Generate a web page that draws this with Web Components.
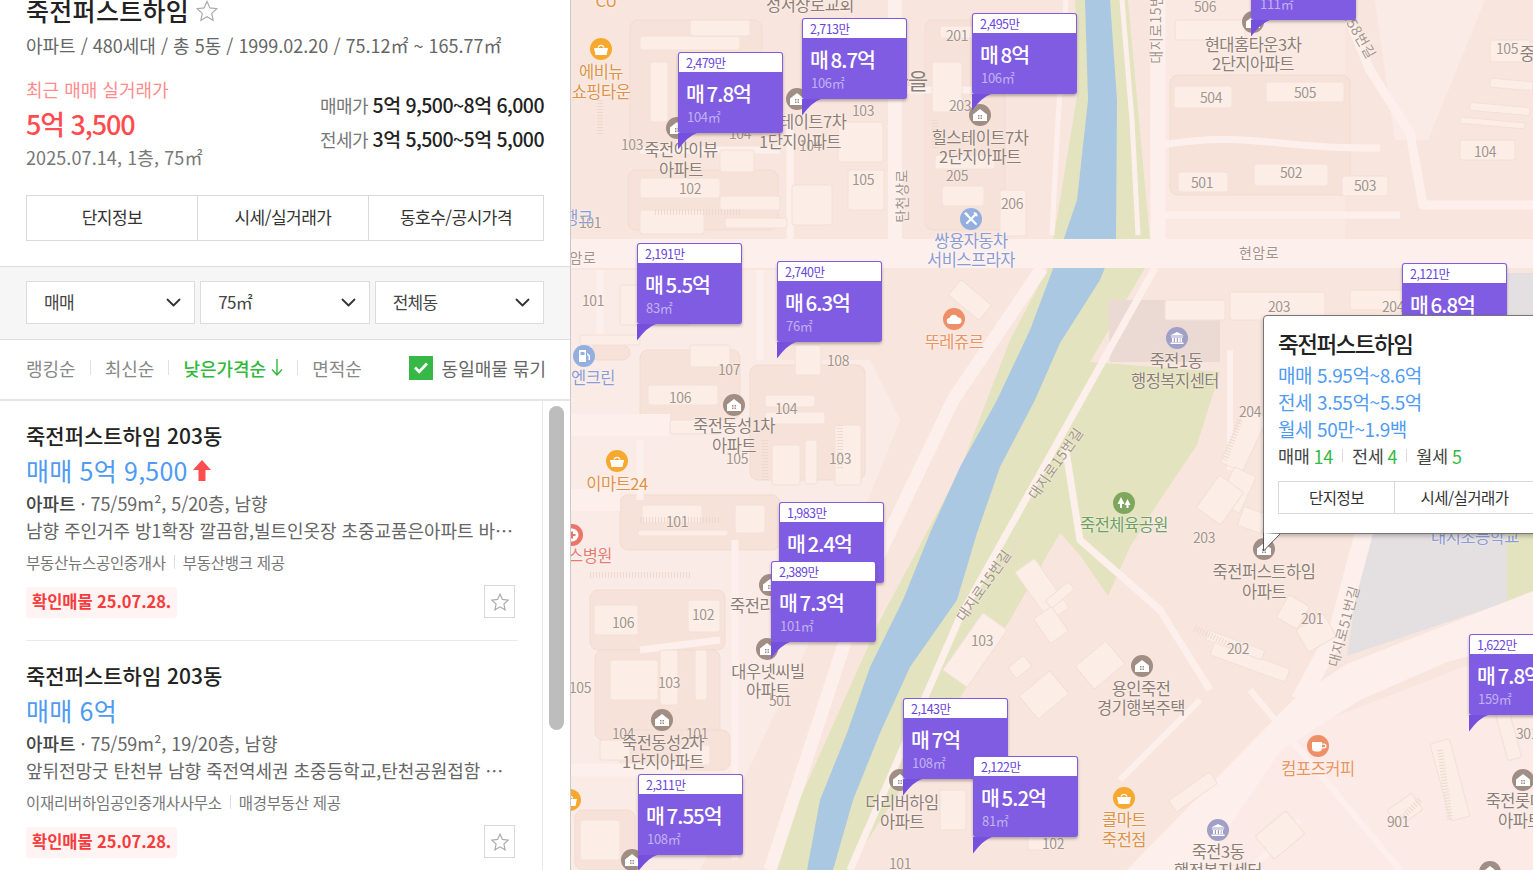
<!DOCTYPE html>
<html lang="ko">
<head>
<meta charset="utf-8">
<title>죽전퍼스트하임</title>
<style>
  html, body { margin: 0; height: 100%; overflow: hidden; background: #fff; }
  body { font-family: "Noto Sans CJK KR", "Noto Sans", sans-serif; color: #222; }
  .page { display: flex; height: 870px; width: 1533px; overflow: hidden; }
</style>
</head>
<body>
<div class="page">
  <side-panel>
    <complex-summary></complex-summary>
    <filter-bar></filter-bar>
    <sort-bar></sort-bar>
    <listing-list>
      <listing-item price="매매 5억 9,500" up info="75/59m², 5/20층, 남향"
        desc="남향 주인거주 방1확장 깔끔함,빌트인옷장 초중교품은아파트 바…"
        agent="부동산뉴스공인중개사" source="부동산뱅크 제공"></listing-item>
      <listing-item price="매매 6억" info="75/59m², 19/20층, 남향"
        desc="앞뒤전망굿 탄천뷰 남향 죽전역세권 초중등학교,탄천공원접함 …"
        agent="이재리버하임공인중개사사무소" source="매경부동산 제공"></listing-item>
    </listing-list>
  </side-panel>

  <map-canvas>
    <map-label x="606" y="0" kind="shop">CU</map-label>
    <map-poi x="601" y="49" type="basket"></map-poi>
    <map-label x="601" y="71" kind="shop">에비뉴</map-label>
    <map-label x="601" y="91" kind="shop">쇼핑타운</map-label>
    <map-label x="810" y="4">성서상로교회</map-label>
    <map-label x="957" y="35" kind="num">201</map-label>
    <map-label x="908" y="79" kind="big">마을</map-label>
    <map-label x="960" y="105" kind="num">203</map-label>
    <map-poi x="980" y="115" type="house"></map-poi>
    <map-label x="980" y="137">힐스테이트7차</map-label>
    <map-label x="980" y="156">2단지아파트</map-label>
    <map-label x="957" y="175" kind="num">205</map-label>
    <map-label x="1012" y="203" kind="num">206</map-label>
    <map-label x="863" y="110" kind="num">103</map-label>
    <map-poi x="797" y="99" type="house"></map-poi>
    <map-label x="798" y="121">힐스테이트7차</map-label>
    <map-label x="810" y="145" kind="num">104</map-label>
    <map-label x="800" y="141">1단지아파트</map-label>
    <map-label x="740" y="133" kind="num">104</map-label>
    <map-label x="632" y="144" kind="num">103</map-label>
    <map-poi x="677" y="128" type="house"></map-poi>
    <map-label x="681" y="149">죽전아이뷰</map-label>
    <map-label x="681" y="169">아파트</map-label>
    <map-label x="690" y="188" kind="num">102</map-label>
    <map-label x="863" y="179" kind="num">105</map-label>
    <map-label x="901" y="196" rot="-90" kind="road">탄천상로</map-label>
    <map-label x="1155" y="22" rot="-90" kind="road">대지로15번길</map-label>
    <map-label x="590" y="222" kind="num">101</map-label>
    <map-label x="578" y="217" kind="civic">행크</map-label>
    <map-label x="583" y="257" kind="road">암로</map-label>
    <map-label x="593" y="300" kind="num">101</map-label>
    <map-poi x="584" y="356" type="gas"></map-poi>
    <map-label x="593" y="377" kind="civic">엔크린</map-label>
    <map-label x="729" y="369" kind="num">107</map-label>
    <map-label x="838" y="360" kind="num">108</map-label>
    <map-label x="680" y="397" kind="num">106</map-label>
    <map-poi x="734" y="405" type="house"></map-poi>
    <map-label x="786" y="408" kind="num">104</map-label>
    <map-label x="734" y="425">죽전동성1차</map-label>
    <map-label x="737" y="458" kind="num">105</map-label>
    <map-label x="734" y="445">아파트</map-label>
    <map-label x="840" y="458" kind="num">103</map-label>
    <map-poi x="617" y="461" type="basket"></map-poi>
    <map-label x="617" y="483" kind="shop">이마트24</map-label>
    <map-label x="677" y="521" kind="num">101</map-label>
    <map-poi x="572" y="535" type="hospital"></map-poi>
    <map-label x="590" y="555" kind="hospital">스병원</map-label>
    <map-label x="703" y="614" kind="num">102</map-label>
    <map-label x="623" y="622" kind="num">106</map-label>
    <map-poi x="770" y="585" type="house"></map-poi>
    <map-label x="752" y="605">죽전리</map-label>
    <map-poi x="767" y="649" type="house"></map-poi>
    <map-label x="780" y="700" kind="num">501</map-label>
    <map-label x="768" y="671">대우넷씨빌</map-label>
    <map-label x="768" y="690">아파트</map-label>
    <map-label x="580" y="687" kind="num">105</map-label>
    <map-label x="669" y="682" kind="num">103</map-label>
    <map-poi x="662" y="720" type="house"></map-poi>
    <map-label x="623" y="733" kind="num">104</map-label>
    <map-label x="697" y="733" kind="num">101</map-label>
    <map-label x="663" y="742">죽전동성2차</map-label>
    <map-label x="663" y="761">1단지아파트</map-label>
    <map-poi x="570" y="800" type="basket"></map-poi>
    <map-poi x="632" y="860" type="house"></map-poi>
    <map-poi x="900" y="780" type="house"></map-poi>
    <map-label x="902" y="802">더리버하임</map-label>
    <map-label x="902" y="821">아파트</map-label>
    <map-label x="900" y="863" kind="num">101</map-label>
    <map-label x="1053" y="843" kind="num">102</map-label>
    <map-label x="982" y="640" kind="num">103</map-label>
    <map-label x="983" y="585" rot="-55" kind="road">대지로15번길</map-label>
    <map-label x="1055" y="463" rot="-55" kind="road">대지로15번길</map-label>
    <map-label x="1343" y="626" rot="-75" kind="road">대지로51번길</map-label>
    <map-poi x="1124" y="503" type="tree"></map-poi>
    <map-label x="1124" y="524" kind="park">죽전체육공원</map-label>
    <map-label x="1204" y="537" kind="num">203</map-label>
    <map-poi x="1264" y="549" type="house"></map-poi>
    <map-label x="1264" y="571">죽전퍼스트하임</map-label>
    <map-label x="1264" y="591">아파트</map-label>
    <map-label x="1312" y="618" kind="num">201</map-label>
    <map-label x="1238" y="648" kind="num">202</map-label>
    <map-poi x="1142" y="666" type="house"></map-poi>
    <map-label x="1141" y="688">용인죽전</map-label>
    <map-label x="1141" y="707">경기행복주택</map-label>
    <map-poi x="1318" y="746" type="cup"></map-poi>
    <map-label x="1318" y="768" kind="food">컴포즈커피</map-label>
    <map-poi x="1124" y="798" type="basket"></map-poi>
    <map-label x="1124" y="819" kind="shop">콜마트</map-label>
    <map-label x="1124" y="839" kind="shop">죽전점</map-label>
    <map-poi x="1218" y="830" type="civic"></map-poi>
    <map-label x="1218" y="851">죽전3동</map-label>
    <map-label x="1218" y="870">행정복지센터</map-label>
    <map-label x="1398" y="821" kind="num">901</map-label>
    <map-poi x="1523" y="780" type="house"></map-poi>
    <map-label x="1515" y="800">죽전롯데</map-label>
    <map-label x="1520" y="820">아파트</map-label>
    <map-label x="1527" y="733" kind="num">301</map-label>
    <map-poi x="1490" y="872" type="house"></map-poi>
    <map-label x="1205" y="6" kind="num">506</map-label>
    <map-poi x="1253" y="22" type="house"></map-poi>
    <map-label x="1253" y="44">현대홈타운3차</map-label>
    <map-label x="1253" y="63">2단지아파트</map-label>
    <map-label x="1211" y="97" kind="num">504</map-label>
    <map-label x="1305" y="92" kind="num">505</map-label>
    <map-label x="1202" y="182" kind="num">501</map-label>
    <map-label x="1291" y="172" kind="num">502</map-label>
    <map-label x="1365" y="185" kind="num">503</map-label>
    <map-label x="1485" y="151" kind="num">104</map-label>
    <map-label x="1507" y="48" kind="num">105</map-label>
    <map-label x="1527" y="53">중</map-label>
    <map-label x="1352" y="21" rot="60" kind="road">대지로58번길</map-label>
    <map-label x="1259" y="252" kind="road">현암로</map-label>
    <map-label x="1279" y="306" kind="num">203</map-label>
    <map-label x="1393" y="306" kind="num">204</map-label>
    <map-poi x="1177" y="338" type="civic"></map-poi>
    <map-label x="1176" y="360">죽전1동</map-label>
    <map-label x="1175" y="380">행정복지센터</map-label>
    <map-label x="1250" y="411" kind="num">204</map-label>
    <map-poi x="971" y="219" type="tool"></map-poi>
    <map-label x="971" y="240" kind="civic">쌍용자동차</map-label>
    <map-label x="971" y="259" kind="civic">서비스프라자</map-label>
    <map-poi x="954" y="319" type="cloud"></map-poi>
    <map-label x="954" y="341" kind="food">뚜레쥬르</map-label>
    <map-label x="1475" y="536" kind="civic">대지초등학교</map-label>

    <price-pin x="1251" y="-61" unit="3,010만" deal="매 9억" area="111㎡"></price-pin>
    <price-pin x="678" y="52" unit="2,479만" deal="매 7.8억" area="104㎡"></price-pin>
    <price-pin x="802" y="18" unit="2,713만" deal="매 8.7억" area="106㎡"></price-pin>
    <price-pin x="972" y="13" unit="2,495만" deal="매 8억" area="106㎡"></price-pin>
    <price-pin x="637" y="243" unit="2,191만" deal="매 5.5억" area="83㎡"></price-pin>
    <price-pin x="777" y="261" unit="2,740만" deal="매 6.3억" area="76㎡"></price-pin>
    <price-pin x="1402" y="263" unit="2,121만" deal="매 6.8억" area="106㎡"></price-pin>
    <price-pin x="779" y="502" unit="1,983만" deal="매 2.4억" area="40㎡"></price-pin>
    <price-pin x="771" y="561" unit="2,389만" deal="매 7.3억" area="101㎡"></price-pin>
    <price-pin x="903" y="698" unit="2,143만" deal="매 7억" area="108㎡"></price-pin>
    <price-pin x="973" y="756" unit="2,122만" deal="매 5.2억" area="81㎡"></price-pin>
    <price-pin x="638" y="774" unit="2,311만" deal="매 7.55억" area="108㎡"></price-pin>
    <price-pin x="1469" y="634" unit="1,622만" deal="매 7.8억" area="159㎡"></price-pin>

    <complex-popup x="1263" y="315"></complex-popup>
  </map-canvas>
</div>

<script>
const MAP_LEFT = 571;

class SidePanel extends HTMLElement {
    constructor() {
        super();
        this.attachShadow({ mode: 'open' });
        this.shadowRoot.innerHTML = `
            <style>
                :host {
                    display: flex;
                    flex-direction: column;
                    flex: none;
                    width: 570px;
                    height: 870px;
                    border-right: 1px solid #c9c9c9;
                    background: #fff;
                    overflow: hidden;
                }
            </style>
            <slot></slot>
        `;
    }
}

class ComplexSummary extends HTMLElement {
    constructor() {
        super();
        this.attachShadow({ mode: 'open' });
        this.shadowRoot.innerHTML = `
            <style>
                :host { display: block; flex: none; height: 267px; box-sizing: border-box; padding: 0 26px; border-bottom: 1px solid #dcdcdc; }
                .title { display: flex; align-items: center; gap: 6px; height: 22px; margin-top: -1px; font-size: 25px; line-height: 22px; font-weight: 500; letter-spacing: .3px; color: #222; white-space: nowrap; }
                .title svg { margin-top: 2px; }
                .sub { margin-top: 11px; height: 26px; line-height: 26px; font-size: 18px; letter-spacing: 0; color: #666; white-space: nowrap; }
                .deal { display: flex; justify-content: space-between; margin-top: 19px; }
                .recent { font-size: 18px; line-height: 24px; letter-spacing: 0; color: #ff8d8d; }
                .price { margin-top: 5px; font-size: 27px; line-height: 36px; letter-spacing: -1.100px; font-weight: 500; color: #ff4d4f; }
                .when { margin-top: 2px; font-size: 18px; line-height: 26px; letter-spacing: .1px; color: #777; }
                .range { padding-top: 11px; text-align: right; font-size: 18px; line-height: 34px; letter-spacing: -.55px; color: #777; }
                .range b { font-weight: 500; color: #222; font-size: 19.5px; }
                seg-buttons { margin-top: 25px; height: 46px; font-size: 17px; --cols: 170px 171px 1fr; --cell-pad: 3px; }
            </style>
            <div class="title">죽전퍼스트하임
                <svg width="24" height="24" viewBox="0 0 24 24" fill="none" stroke="#aaa" stroke-width="1.200"><path d="M12 2.500l2.900 6.400 6.900.8-5.100 4.700 1.400 6.900-6.100-3.500-6.100 3.500 1.400-6.900-5.100-4.700 6.900-.8z"/></svg>
            </div>
            <div class="sub">아파트 / 480세대 / 총 5동 / 1999.02.20 / 75.12㎡ ~ 165.77㎡</div>
            <div class="deal">
                <div>
                    <div class="recent">최근 매매 실거래가</div>
                    <div class="price">5억 3,500</div>
                    <div class="when">2025.07.14, 1층, 75㎡</div>
                </div>
                <div class="range">
                    <div>매매가 <b>5억 9,500~8억 6,000</b></div>
                    <div>전세가 <b>3억 5,500~5억 5,000</b></div>
                </div>
            </div>
            <seg-buttons labels="단지정보,시세/실거래가,동호수/공시가격"></seg-buttons>
        `;
    }
}

class SegButtons extends HTMLElement {
    connectedCallback() {
        if (this.shadowRoot) return;
        this.attachShadow({ mode: 'open' });
        const cells = this.getAttribute('labels').split(',').map(t => `<div class="cell">${t}</div>`).join('');
        this.shadowRoot.innerHTML = `
            <style>
                :host { display: grid; grid-template-columns: var(--cols); box-sizing: border-box; border: 1px solid #d9d9d9; background: #fff; }
                .cell { display: flex; align-items: center; justify-content: center; padding-bottom: var(--cell-pad, 0); letter-spacing: -.5px; color: #333; white-space: nowrap; }
                .cell + .cell { border-left: 1px solid #d9d9d9; }
            </style>
            ${cells}
        `;
    }
}

class FilterBar extends HTMLElement {
    constructor() {
        super();
        this.attachShadow({ mode: 'open' });
        this.shadowRoot.innerHTML = `
            <style>
                :host { display: flex; flex: none; gap: 5px; box-sizing: border-box; height: 73px; padding: 14px 26px 0; background: #f6f6f6; border-bottom: 1px solid #dedede; }
            </style>
            <select-box>매매</select-box>
            <select-box>75㎡</select-box>
            <select-box>전체동</select-box>
        `;
    }
}

class SelectBox extends HTMLElement {
    constructor() {
        super();
        this.attachShadow({ mode: 'open' });
        this.shadowRoot.innerHTML = `
            <style>
                :host { display: flex; flex: 1 1 0; align-items: center; justify-content: space-between; box-sizing: border-box; height: 43px; padding: 0 13px 2px 17px; background: #fff; border: 1px solid #dcdcdc; font-size: 17px; letter-spacing: -.7px; color: #444; }
                svg { display: block; margin-top: 2px; }
            </style>
            <slot></slot>
            <svg width="15" height="9" viewBox="0 0 15 9" fill="none" stroke="#333" stroke-width="1.800" stroke-linecap="round" stroke-linejoin="round"><path d="M1.500 1.500l6 6 6-6"/></svg>
        `;
    }
}

class SortBar extends HTMLElement {
    constructor() {
        super();
        this.attachShadow({ mode: 'open' });
        this.shadowRoot.innerHTML = `
            <style>
                :host { display: flex; flex: none; align-items: center; box-sizing: border-box; height: 61px; padding: 0 24px 4px 26px; border-bottom: 2px solid #e6e6e6; font-size: 18px; letter-spacing: 0; color: #888; white-space: nowrap; }
                .sep { width: 1px; height: 15px; margin: 0 14px; background: #e2e2e2; }
                .on { display: flex; align-items: center; gap: 5px; color: #2fb83c; font-weight: 500; }
                .bundle { display: flex; align-items: center; gap: 9px; margin-left: auto; color: #666; }
                .check { display: flex; align-items: center; justify-content: center; width: 24px; height: 24px; background: #35b845; }
            </style>
            <span>랭킹순</span><i class="sep"></i>
            <span>최신순</span><i class="sep"></i>
            <span class="on">낮은가격순
                <svg width="12" height="17" viewBox="0 0 12 17" fill="none" stroke="#2fb83c" stroke-width="1.400"><path d="M6 0v15.500M1 10.500l5 5.500 5-5.500"/></svg>
            </span><i class="sep"></i>
            <span>면적순</span>
            <span class="bundle">
                <span class="check"><svg width="16" height="13" viewBox="0 0 16 13" fill="none" stroke="#fff" stroke-width="2.800"><path d="M2 6.500l4.200 4.200L14 2.500"/></svg></span>
                동일매물 묶기
            </span>
        `;
    }
}

class ListingList extends HTMLElement {
    constructor() {
        super();
        this.attachShadow({ mode: 'open' });
        this.shadowRoot.innerHTML = `
            <style>
                :host { display: flex; flex: 1 1 0; min-height: 0; overflow: hidden; }
                .items { flex: none; width: 542px; padding: 0 24px 0 26px; box-sizing: border-box; }
                .rail { flex: 1 1 0; border-left: 1px solid #e8e8e8; padding: 5px 6px; }
                .thumb { width: 15px; height: 324px; border-radius: 8px; background: #bdbdbd; }
            </style>
            <div class="items"><slot></slot></div>
            <div class="rail"><div class="thumb"></div></div>
        `;
    }
}

class ListingItem extends HTMLElement {
    connectedCallback() {
        if (this.shadowRoot) return;
        this.attachShadow({ mode: 'open' });
        const a = n => this.getAttribute(n) || '';
        const arrow = this.hasAttribute('up')
            ? '<svg width="18" height="21" viewBox="0 0 18 21" fill="#ff4d4f"><path d="M9 0l9 10h-5.500v11h-7V10H0z"/></svg>' : '';
        this.shadowRoot.innerHTML = `
            <style>
                :host { display: block; padding: 21px 0 22px; border-bottom: 1px solid #e9e9e9; white-space: nowrap; }
                .title { font-size: 21px; line-height: 26px; font-weight: 500; letter-spacing: 0; color: #222; }
                .price { display: flex; align-items: center; gap: 5px; margin-top: 5px; height: 34px; font-size: 25px; letter-spacing: .2px; color: #4f9bf2; }
                .info { margin-top: 3px; font-size: 18px; line-height: 26px; letter-spacing: -.05px; color: #666; }
                .info b { font-weight: 500; color: #444; }
                .desc { margin-top: 1px; font-size: 18px; line-height: 26px; letter-spacing: -.05px; color: #666; overflow: hidden; }
                .agent { display: flex; align-items: center; margin-top: 9px; font-size: 15.5px; line-height: 20px; letter-spacing: -.28px; color: #777; }
                .agent i { width: 1px; height: 14px; margin: 0 8px; background: #ddd; }
                .foot { display: flex; justify-content: space-between; margin: 13px 3px 0 0; }
                .badge { align-self: flex-end; padding: 0 6px; height: 31px; line-height: 29px; border-radius: 4px; background: #fff3f3; color: #f63d3d; font-size: 16.5px; font-weight: 700; letter-spacing: -.05px; }
                .star { display: flex; align-items: center; justify-content: center; width: 31px; height: 33px; box-sizing: border-box; border: 1px solid #d9d9d9; }
            </style>
            <div class="title">죽전퍼스트하임 203동</div>
            <div class="price">${a('price')}${arrow}</div>
            <div class="info"><b>아파트</b> · ${a('info')}</div>
            <div class="desc">${a('desc')}</div>
            <div class="agent">${a('agent')}<i></i>${a('source')}</div>
            <div class="foot">
                <span class="badge">확인매물 25.07.28.</span>
                <span class="star"><svg width="20" height="20" viewBox="0 0 24 24" fill="none" stroke="#aaa" stroke-width="1.400"><path d="M12 2.500l2.900 6.400 6.900.8-5.100 4.700 1.400 6.900-6.100-3.500-6.100 3.500 1.400-6.900-5.100-4.700 6.900-.8z"/></svg></span>
            </div>
        `;
    }
}

// building footprints on the map, in page coordinates: x, y, w, h, rotation
const BUILDINGS = [
    [640,36,100,14,0],[650,62,18,60,0],[690,20,60,16,0],[720,150,34,22,0],[640,178,80,20,0],
    [832,60,60,20,0],[838,122,45,40,0],[848,170,36,40,0],[792,185,40,40,0],[640,210,64,24,0],
    [720,196,60,14,0],[725,218,62,10,0],[940,26,40,12,0],[932,62,30,50,0],[935,155,60,14,0],
    [942,186,42,20,0],[1000,190,26,46,0],[950,290,40,20,40],[620,285,70,40,0],
    [795,345,26,30,0],[690,345,40,22,0],[648,385,70,20,0],[580,335,60,10,0],[670,420,50,14,0],
    [765,395,50,12,0],[765,412,60,12,0],[835,425,26,60,0],[805,440,12,44,0],
    [772,445,28,40,0],[642,505,60,18,0],[638,530,90,6,0],[735,505,30,28,0],
    [594,605,44,30,0],[688,600,32,32,0],[610,660,48,40,0],[660,650,18,55,0],[695,650,12,50,0],
    [600,740,30,20,0],[680,745,30,20,0],[580,820,40,40,0],[650,870,40,10,0],
    [1030,560,24,60,-35],[1040,610,22,30,-35],[1080,650,40,30,-40],[1024,680,40,30,-40],
    [1175,20,70,20,0],[1174,86,58,22,0],[1266,82,78,20,0],[1178,172,50,20,0],[1254,164,74,22,0],
    [1342,176,46,20,0],[1460,140,55,20,0],[1490,40,40,22,0],[1490,80,43,9,5],[1470,105,60,8,5],
    [1460,120,65,6,5],[1165,300,60,20,0],[1230,292,95,28,0],[1350,290,70,20,0],
    [1232,410,24,60,25],[1225,470,24,40,25],[1205,480,30,40,35],[1240,510,25,20,20],
    [1280,600,26,24,-60],[1210,655,80,14,20],[1205,640,60,10,20],[1300,620,32,26,-30],
    [1168,785,50,14,-35],[1260,820,40,30,-40],[1390,800,30,20,-35],[1440,740,20,80,-15],[1500,700,14,60,-15],
    [960,615,30,70,35],[1010,660,20,14,-40],[1045,590,30,10,-40],[1028,820,30,30,0],[940,790,26,40,0]
];

// darker yards behind the apartment blocks: x, y, w, h
const YARDS = [
    [630,20,132,130],[628,170,150,60],[925,20,80,210],[590,345,40,15],[640,350,100,70],[750,365,115,115],
    [620,495,160,55],[590,590,135,60],[595,650,125,90],[620,730,110,40],[575,810,60,60],[1170,75,180,120]
];

class MapCanvas extends HTMLElement {
    constructor() {
        super();
        this.attachShadow({ mode: 'open' });
        const blocks = BUILDINGS.map(([x, y, w, h, r]) =>
            `<rect x="${x}" y="${y}" width="${w}" height="${h}" rx="2" transform="rotate(${r} ${x + w / 2} ${y + h / 2})"/>`).join('');
        const yards = YARDS.map(([x, y, w, h]) =>
            `<rect x="${x}" y="${y}" width="${w}" height="${h}" rx="8"/>`).join('');
        this.shadowRoot.innerHTML = `
            <style>
                :host { display: block; position: relative; flex: 1 1 0; height: 870px; overflow: hidden; background: #f8e6de; font-family: "Noto Sans CJK KR", sans-serif; }
                svg { display: block; position: absolute; left: 0; top: 0; }
                .bld rect { fill: #fcede7; stroke: #f2e0d7; stroke-width: 1; }
                .yards rect { fill: #f6e2d9; stroke: #f1dcd1; }
                .road { fill: none; stroke: #fdf0ec; stroke-linejoin: round; }
                .park { fill: none; stroke: #edd9cd; stroke-width: 6; stroke-dasharray: 1 2; }
            </style>
            <svg width="962" height="870" viewBox="571 0 962 870">
                <!-- pale ground -->
                <path fill="#fbebe6" d="M571 270H780V360H870L900 420 820 620 700 870H571z"/>
                <path fill="#fbebe6" d="M1375 0H1485L1428 140H1395z"/>
                <path fill="#fbebe6" d="M1165 0H1345V240H1165z" opacity=".5"/>
                <path fill="#fbebe6" d="M1180 830L1300 730 1533 640V870H1130z" opacity=".8"/>
                <g class="yards">${yards}</g>
                <!-- river banks and park -->
                <path fill="#e3e3bf" d="M1075 0H1128L1150 240 1145 268 1090 362 1220 372 1197 445 1160 500 1130 547 1108 596 1080 555 1060 533 1010 620 920 760 848 870H768L880 620 960 470 1010 340 1048 268 1060 200 1078 90z"/>
                <path fill="#e3e3bf" d="M1480 520H1533V596L1507 602z"/>
                <path fill="#eadad3" d="M1108 300H1220V362H1110z"/>
                <path fill="#e4dfe1" d="M1367 518H1507V602L1347 656z"/>
                <path fill="#e4dfe1" d="M1507 273H1533V320H1507z"/>
                <path fill="#abc8e2" d="M1085 0H1110L1117 100 1116 240 1100 280 1060 343 1035 400 1000 467 977 533 957 600 910 667 880 733 853 800 833 870H807L820 800 847 733 870 667 903 600 930 533 960 467 997 400 1030 330 1060 250 1077 200 1088 100z"/>
                <!-- roads -->
                <path fill="#fdf0ec" d="M571 239H1533V268H571z"/>
                <path fill="#fdf0ec" d="M1533 591L1347 664 1293 700 1127 870H1200L1280 751 1360 700 1447 662 1533 638z"/>
                <path class="road" stroke-width="15" d="M1158 0V240"/>
                <path class="road" stroke-width="14" d="M895 0V240"/>
                <path class="road" stroke-width="13" d="M1042 268L953 400 862 590 770 870"/>
                <path class="road" stroke-width="7" d="M1155 268L1070 420 960 617 850 870"/>
                <path class="road" stroke-width="5" d="M1122 0L1132 120 1138 235M1066 0L1058 120 1052 235"/>
                <path class="road" stroke-width="7" d="M1065 445L1080 540 1160 610 1210 690"/>
                <path class="road" stroke-width="18" d="M1370 510L1338 630 1300 700"/>
                <path class="road" stroke-width="9" d="M1345 10L1370 70 1410 133 1423 205H1533"/>
                <path class="road" stroke-width="22" d="M571 425H670M571 500H620"/>
                <path class="road" stroke-width="7" d="M600 270V340M760 270V360M640 440V500M735 540V860M720 640L640 650"/>
                <path class="road" stroke-width="13" d="M571 770H680"/>
                <path class="road" stroke-width="7" d="M1160 145C1250 130 1280 150 1380 148M1165 215H1400"/>
                <path class="road" stroke-width="7" d="M905 90H1000M790 120V240M640 150H780"/>
                <path class="road" stroke-width="6" d="M1230 350V470M1250 690L1400 870M1200 700L1120 780M1300 820L1250 870"/>
                <g class="bld">${blocks}</g>
                <path class="park" d="M655 212H740M600 100V135M640 520H720M590 575H690M765 440V480M840 425V470M1020 540L1000 570M1240 420L1225 460M1195 628L1240 650M1400 820L1420 800M1440 750L1450 820M935 120V150"/>
            </svg>
            <slot></slot>
        `;
    }
}

class MapLabel extends HTMLElement {
    connectedCallback() {
        if (this.shadowRoot) return;
        this.attachShadow({ mode: 'open' });
        const x = +this.getAttribute('x') - MAP_LEFT, y = +this.getAttribute('y');
        const rot = this.getAttribute('rot') || 0;
        this.style.left = x + 'px';
        this.style.top = y + 'px';
        this.style.transform = `translate(-50%, -50%) rotate(${rot}deg)`;
        this.shadowRoot.innerHTML = `
            <style>
                :host { position: absolute; white-space: nowrap; font-size: 16.5px; line-height: 20px; letter-spacing: -.5px; color: #8e7d74; text-shadow: 0 0 2px #fff; }
                :host([kind=num]) { font-size: 14px; letter-spacing: -.5px; color: #a59389; }
                :host([kind=road]) { font-size: 14px; letter-spacing: .5px; color: #a59389; }
                :host([kind=big]) { font-size: 22px; }
                :host([kind=shop]) { color: #dd9347; }
                :host([kind=food]) { color: #ec9362; }
                :host([kind=civic]) { color: #8c9bd3; }
                :host([kind=park]) { color: #6f9e63; }
                :host([kind=hospital]) { color: #e57e72; }
            </style>
            <slot></slot>
        `;
    }
}

const POI_ICONS = {
    house: ['#a08d84', '<path fill="#fff" d="M11 5l7 5.500V17H4v-6.500z"/><path fill="#a08d84" d="M9 11h1.500v1.500H9zM11.500 11H13v1.500h-1.500zM9 13.500h1.500V15H9zM11.500 13.500H13V15h-1.500z"/>'],
    basket: ['#f6a92e', '<path fill="#fff" d="M4 10h14l-1.500 7h-11zM7.500 9.500a3.600 3.600 0 017 0h-1.500a2.100 2.100 0 00-4 0z"/>'],
    tool: ['#93afe0', '<path stroke="#fff" stroke-width="2" stroke-linecap="round" d="M8 8l8 8"/><path stroke="#fff" stroke-width="2.200" stroke-linecap="round" d="M15 7l-8 8"/><path fill="#fff" d="M4 5.500l2-1.500 3 3-1.500 2zM13.500 4.500a3.200 3.200 0 014 4l-2-.5-1.500-1.500z"/>'],
    cloud: ['#ee8f68', '<path fill="#fff" d="M7 16a3 3 0 01-.5-6 4.500 4.500 0 018.500-.5 3.300 3.300 0 011 6.500z"/>'],
    cup: ['#ee8f68', '<path fill="#fff" d="M5 7h10v6a3.500 3.500 0 01-3.500 3.500h-3A3.500 3.500 0 015 13zM15 8.500h2a2 2 0 010 5h-2v-1.200h1.800a.8.800 0 000-2.600H15z"/>'],
    civic: ['#a09fc6', '<path fill="#fff" d="M11 5l7 3.500H4zM5 9.500h12v1H5zM6 11h1.800v4H6zM9 11h1.800v4H9zM12 11h1.800v4H12zM14.500 11h1.500v4h-1.500zM4.500 15.500h13v1.500h-13z"/>'],
    tree: ['#7ea65c', '<path fill="#fff" d="M8 5l3.500 7H9v4H7v-4H4.500zM14.500 7l3 6H15.500v3h-2v-3H11.500z"/>'],
    gas: ['#93afe0', '<path fill="#fff" d="M6 5h7v12H6zM14 8l3 2.500V15h-1.500v-4l-1.500-1.200z"/><path fill="#93afe0" d="M7.500 7h4v3h-4z"/>'],
    hospital: ['#ea7468', '<circle cx="11" cy="11" r="6.500" fill="#fff"/><path fill="#ea7468" d="M10 7.500h2V10h2.500v2H12v2.500h-2V12H7.500v-2H10z"/>']
};

class MapPoi extends HTMLElement {
    connectedCallback() {
        if (this.shadowRoot) return;
        this.attachShadow({ mode: 'open' });
        const [color, glyph] = POI_ICONS[this.getAttribute('type')];
        this.style.left = (+this.getAttribute('x') - MAP_LEFT - 11) + 'px';
        this.style.top = (+this.getAttribute('y') - 11) + 'px';
        this.shadowRoot.innerHTML = `
            <style>:host { position: absolute; width: 22px; height: 22px; } svg { display: block; }</style>
            <svg width="22" height="22" viewBox="0 0 22 22"><circle cx="11" cy="11" r="11" fill="${color}"/>${glyph}</svg>
        `;
    }
}

class PricePin extends HTMLElement {
    connectedCallback() {
        if (this.shadowRoot) return;
        this.attachShadow({ mode: 'open' });
        this.style.left = (+this.getAttribute('x') - MAP_LEFT) + 'px';
        this.style.top = this.getAttribute('y') + 'px';
        const a = n => this.getAttribute(n);
        this.shadowRoot.innerHTML = `
            <style>
                :host { position: absolute; isolation: isolate; width: 105px; height: 81px; box-sizing: border-box; }
                .box { position: relative; display: flex; flex-direction: column; height: 100%; box-sizing: border-box; border-radius: 3px; background: #7f5ce2; box-shadow: 0 2px 3px rgba(90,70,70,.4); overflow: hidden; }
                .unit { height: 19px; margin: 1px 1px 0; line-height: 19px; padding-left: 7px; border-radius: 2px 2px 0 0; background: #fff; color: #6a45dc; font-size: 12.5px; letter-spacing: -.55px; }
                .deal { margin-top: 5px; padding-left: 8px; height: 30px; line-height: 32px; color: #fff; font-size: 20.5px; font-weight: 500; letter-spacing: -1px; word-spacing: -2px; white-space: nowrap; }
                .area { padding-left: 9px; height: 20px; line-height: 20px; color: #c2b2f2; font-size: 13px; letter-spacing: -.3px; }
                svg { position: absolute; left: 0; top: 81px; }
            </style>
            <div class="box">
                <div class="unit">${a('unit')}</div>
                <div class="deal">${a('deal')}</div>
                <div class="area">${a('area')}</div>
            </div>
            <svg width="19" height="17" viewBox="0 0 19 17"><path d="M0 0h19Q10 3 0 16.500z" fill="#7450dc"/></svg>
        `;
    }
}

class ComplexPopup extends HTMLElement {
    connectedCallback() {
        if (this.shadowRoot) return;
        this.attachShadow({ mode: 'open' });
        this.style.left = (+this.getAttribute('x') - MAP_LEFT) + 'px';
        this.style.top = this.getAttribute('y') + 'px';
        this.shadowRoot.innerHTML = `
            <style>
                :host { position: absolute; isolation: isolate; z-index: 2; width: 300px; height: 219px; box-sizing: border-box; padding: 13px 14px 0; background: #fff; border: 1px solid #777; border-radius: 4px 0 0 0; box-shadow: 0 2px 4px rgba(0,0,0,.25); color: #222; }
                .name { font-size: 22.5px; line-height: 28px; font-weight: 500; letter-spacing: -1.500px; }
                .rows { margin-top: 4px; color: #4f9bf2; font-size: 19px; line-height: 27px; letter-spacing: -.4px; }
                .counts { display: flex; align-items: center; height: 27px; font-size: 17.5px; letter-spacing: -.3px; color: #444; }
                .counts b { margin-left: 4px; font-weight: 400; color: #35b845; font-size: 18px; }
                .counts i { width: 1px; height: 13px; margin: 0 9px; background: #ddd; }
                seg-buttons { margin-top: 12px; width: 257px; height: 33px; font-size: 15.5px; --cols: 115px 1fr; --cell-pad: 2px; }
                svg { position: absolute; left: -1px; top: 217px; }
            </style>
            <div class="name">죽전퍼스트하임</div>
            <div class="rows">
                <div>매매 5.95억~8.6억</div>
                <div>전세 3.55억~5.5억</div>
                <div>월세 50만~1.9백</div>
            </div>
            <div class="counts">매매<b>14</b><i></i>전세<b>4</b><i></i>월세<b>5</b></div>
            <seg-buttons labels="단지정보,시세/실거래가"></seg-buttons>
            <svg width="20" height="20" viewBox="0 0 20 20"><path d="M0.500 0V18L17 1" fill="#fff" stroke="#555" stroke-width="1"/></svg>
        `;
    }
}

customElements.define('side-panel', SidePanel);
customElements.define('seg-buttons', SegButtons);
customElements.define('select-box', SelectBox);
customElements.define('complex-summary', ComplexSummary);
customElements.define('filter-bar', FilterBar);
customElements.define('sort-bar', SortBar);
customElements.define('listing-list', ListingList);
customElements.define('listing-item', ListingItem);
customElements.define('map-canvas', MapCanvas);
customElements.define('map-label', MapLabel);
customElements.define('map-poi', MapPoi);
customElements.define('price-pin', PricePin);
customElements.define('complex-popup', ComplexPopup);
</script>
</body>
</html>
